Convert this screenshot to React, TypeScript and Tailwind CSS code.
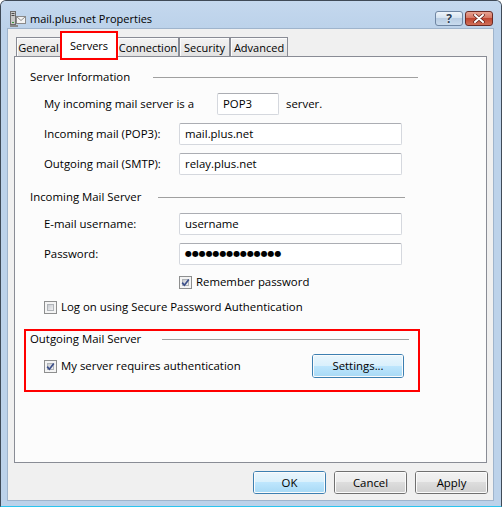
import React from 'react';

const CheckBox = ({ checked }: { checked?: boolean }) => (
  <span className="relative block w-[13px] h-[13px] shrink-0 border border-[#8e8f8f] bg-[#f4f4f4] p-[2px]">
    <span className="block w-full h-full border border-[#b0b4b9] bg-linear-to-br from-[#c9ccd1] to-[#f1f1f2]" />
    {checked && (
      <svg className="absolute inset-0" width="11" height="11" viewBox="0 0 11 11">
        <path d="M2.2 5.6 L4.4 8.2 L8.8 2.4" stroke="#3c4f8a" strokeWidth="1.7" fill="none" />
      </svg>
    )}
  </span>
);

const Button = ({ label, blue, wide }: { label: string; blue?: boolean; wide?: boolean }) => (
  <div
    className={`${wide ? 'w-[92px] h-[24px]' : 'w-[73px] h-[23px]'} rounded-[3px] border ${
      blue ? 'border-[#3c7fb1]' : 'border-[#707070]'
    }`}
  >
    <div
      className={`h-full rounded-[2px] flex items-center justify-center shadow-[inset_0_0_0_1px_#fbfbfb] ${
        blue
          ? 'bg-[linear-gradient(#eaf6fd_0%,#d9f0fc_50%,#bee6fd_50%,#a7d9f5_100%)]'
          : 'bg-[linear-gradient(#f2f2f2_0%,#ebebeb_50%,#dddddd_50%,#cfcfcf_100%)]'
      }`}
    >
      {label}
    </div>
  </div>
);

const TextBox = ({ value, w = 'w-[223px]' }: { value: React.ReactNode; w?: string }) => (
  <div
    className={`${w} h-[22px] rounded-[2px] border border-[#d5d8de] border-t-[#abadb3] bg-white flex items-center pl-[5px]`}
  >
    {value}
  </div>
);

const Heading = ({ text, textW, lineW }: { text: string; textW: string; lineW: string }) => (
  <div className="h-[16px] flex items-center">
    <div className={textW}>{text}</div>
    <div className={`${lineW} h-px bg-[#a0a0a0]`} />
  </div>
);

const FieldRow = ({ label, value }: { label: string; value: React.ReactNode }) => (
  <div className="mt-[8px] h-[22px] flex items-center pl-[29px]">
    <div className="w-[135px]">{label}</div>
    <TextBox value={value} />
  </div>
);

const tabs = [
  { name: 'General', w: 'w-[45px]' },
  { name: 'Servers', w: 'w-[56px]', active: true },
  { name: 'Connection', w: 'w-[62px]' },
  { name: 'Security', w: 'w-[51px]' },
  { name: 'Advanced', w: 'w-[58px]' },
];

export default function App() {
  return (
    <div className="w-[502px] h-[507px] flex flex-col bg-[#bcd2ea] border border-[#3f4a57] border-b-[#2cc4ee] rounded-t-[6px] overflow-hidden text-[11.4px] text-black font-['Open_Sans',sans-serif] leading-none">
      {/* title bar */}
      <div className="h-[27px] flex items-start bg-linear-to-b from-[#c4d8ee] to-[#bcd2ea]">
        <div className="mt-[8px] ml-[9px] h-[18px] flex items-center">
          <svg width="16" height="17" viewBox="0 0 16 17">
            <rect x="0.5" y="1.5" width="5" height="13" fill="#c8c8c8" stroke="#6e6e6e" />
            <rect x="1.5" y="3" width="3" height="1" fill="#4a4a4a" />
            <rect x="1.5" y="5" width="3" height="1" fill="#4a4a4a" />
            <rect x="2" y="12" width="2" height="1" fill="#3a9a3a" />
            <rect x="6.5" y="6.5" width="9" height="7" fill="#f4f4f4" stroke="#8a8a8a" />
            <path d="M6.5 6.5 L11 10.5 L15.5 6.5" stroke="#8a8a8a" fill="none" />
            <rect x="0" y="15" width="8" height="2" fill="#8a8a8a" />
          </svg>
          <span className="ml-[4px] text-[11px]">mail.plus.net Properties</span>
        </div>
        <div className="ml-auto mr-[8px] mt-[10px] flex gap-[2px]">
          <div className="w-[28px] h-[15px] rounded-[3px] border border-[#6f86a3] bg-[linear-gradient(#eef4fa_0%,#d3e1ef_50%,#b9cde3_50%,#c9dbee_100%)] flex items-center justify-center">
            <span className="text-[12px] font-bold text-[#2f3f55] [text-shadow:0_0_2px_#fff]">?</span>
          </div>
          <div className="w-[28px] h-[15px] rounded-[3px] border border-[#6b2b26] bg-[linear-gradient(#e8a493_0%,#d3725f_50%,#bf4530_50%,#d0705a_100%)] flex items-center justify-center">
            <svg width="12" height="9" viewBox="0 0 12 9">
              <path d="M2 1 L10 8 M10 1 L2 8" stroke="#5a1e18" strokeWidth="3.4" strokeLinecap="round" />
              <path d="M2 1 L10 8 M10 1 L2 8" stroke="#ffffff" strokeWidth="2" strokeLinecap="round" />
            </svg>
          </div>
        </div>
      </div>

      {/* client area */}
      <div className="ml-[6px] w-[487px] h-[473px] border border-[#9fb4cc] bg-[#f0f0f0] flex flex-col">
        {/* tabs */}
        <div className="h-[27px] pl-[8px] flex items-end text-[11px]">
          {tabs.map((t) =>
            t.active ? (
              <div
                key={t.name}
                className={`${t.w} relative z-10 h-[25px] -mb-px bg-white border border-b-0 border-[#898c95] flex justify-center pt-[7px]`}
              >
                {t.name}
                <div className="absolute -left-[2px] -top-[2px] w-[58px] h-[29px] border-2 border-[#ff0000]" />
              </div>
            ) : (
              <div
                key={t.name}
                className={`${t.w} h-[19px] border border-b-0 border-[#898c95] shadow-[inset_1px_1px_0_#fcfcfc] bg-linear-to-b from-[#f3f3f3] to-[#e2e2e2] flex justify-center pt-[4px]`}
              >
                {t.name}
              </div>
            )
          )}
        </div>

        {/* panel */}
        <div className="ml-[6px] w-[473px] h-[407px] border border-[#898c95] bg-[#fcfcfc] flex flex-col">
          <div className="mt-[12px] pl-[15px]">
            <Heading text="Server Information" textW="w-[123px]" lineW="w-[265px]" />
          </div>
          <div className="mt-[8px] h-[22px] flex items-center pl-[29px]">
            <div className="w-[173px]">My incoming mail server is a</div>
            <TextBox value="POP3" w="w-[62px]" />
            <div className="ml-[7px]">server.</div>
          </div>
          <FieldRow label="Incoming mail (POP3):" value="mail.plus.net" />
          <FieldRow label="Outgoing mail (SMTP):" value="relay.plus.net" />

          <div className="mt-[14px] pl-[15px]">
            <Heading text="Incoming Mail Server" textW="w-[128px]" lineW="w-[247px]" />
          </div>
          <FieldRow label="E-mail username:" value="username" />
          <FieldRow
            label="Password:"
            value={<span className="text-[8px] tracking-[-0.1px] font-['DejaVu_Sans',sans-serif]">●●●●●●●●●●●●●●</span>}
          />
          <div className="mt-[9px] h-[16px] pl-[164px] flex items-center">
            <CheckBox checked />
            <span className="ml-[4px]">Remember password</span>
          </div>
          <div className="mt-[9px] h-[16px] pl-[29px] flex items-center">
            <CheckBox />
            <span className="ml-[4px]">Log on using Secure Password Authentication</span>
          </div>

          {/* outgoing, highlighted */}
          <div className="mt-[14px] ml-[9px] w-[396px] h-[63px] border-2 border-[#ff0000] flex flex-col">
            <div className="pl-[4px]">
              <Heading text="Outgoing Mail Server" textW="w-[132px]" lineW="w-[247px]" />
            </div>
            <div className="mt-[7px] h-[24px] pl-[18px] pr-[14px] flex items-center">
              <CheckBox checked />
              <span className="ml-[4px]">My server requires authentication</span>
              <div className="ml-auto">
                <Button label="Settings..." blue wide />
              </div>
            </div>
          </div>
        </div>

        {/* dialog buttons */}
        <div className="mt-[8px] pr-[5px] flex justify-end gap-[8px]">
          <Button label="OK" blue />
          <Button label="Cancel" />
          <Button label="Apply" />
        </div>
      </div>
    </div>
  );
}
